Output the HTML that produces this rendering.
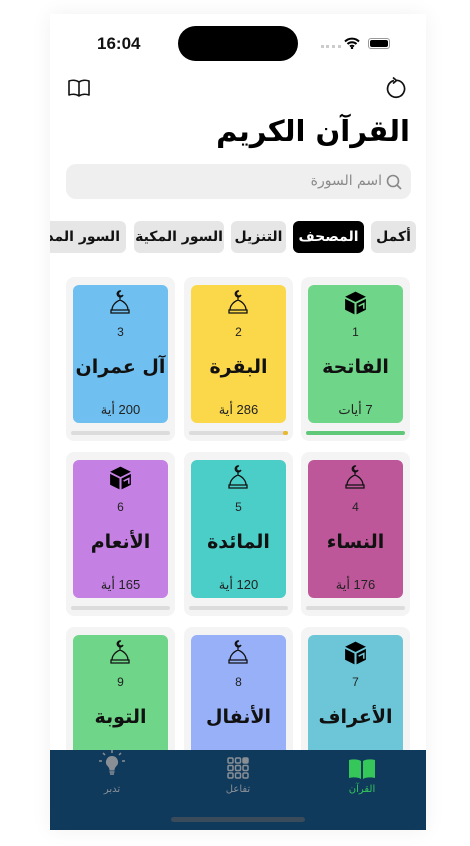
<!DOCTYPE html>
<html><head><meta charset="utf-8">
<style>
*{margin:0;padding:0;box-sizing:border-box}
body{width:470px;height:846px;background:#fff;position:relative;overflow:hidden;font-family:"Liberation Sans","Noto Sans CJK SC",sans-serif}
.screen{position:absolute;left:50px;top:14px;width:376px;height:816px;background:#fff;box-shadow:0 0 20px rgba(0,0,0,0.06);overflow:hidden}
.a{position:absolute}
.ar{font-family:"DejaVu Sans","Noto Sans CJK SC",sans-serif;direction:rtl}
.chip{position:absolute;top:207px;height:32px;border-radius:6px;background:#e6e6e6;font-size:14px;font-weight:bold;line-height:32px;text-align:center;color:#111;white-space:nowrap;overflow:hidden}
.cell{position:absolute;width:109px;height:164px;background:#f4f4f4;border-radius:8px}
.in{position:absolute;left:7px;top:8px;width:95px;height:138px;border-radius:6px;text-align:center}
.num{position:absolute;top:40px;width:100%;font-size:12px;color:#222}
.nm{position:absolute;top:71px;width:100%;font-size:19px;font-weight:bold;color:#111;direction:rtl;white-space:nowrap;font-family:"DejaVu Sans",sans-serif}
.ay{position:absolute;top:117px;width:100%;font-size:13px;color:#222;direction:rtl}
.bar{position:absolute;left:5px;top:154px;width:99px;height:4px;border-radius:2px;background:#dcdcdc}
.ic{position:absolute;left:34px;top:4px}
</style></head><body>
<div class="screen">
<div class="a" style="left:47px;top:20px;font-size:17px;font-weight:bold;color:#111">16:04</div>
<div class="a" style="left:128px;top:12px;width:120px;height:35px;border-radius:18px;background:#000"></div>
<div class="a" style="left:271px;top:31px;width:20px;height:3px;border-top:3px dotted #ccc"></div>
<svg class="a" style="left:294px;top:23px" width="16" height="12" viewBox="0 0 16 12"><path d="M1 4.5a10 10 0 0 1 14 0M3.5 7a6.5 6.5 0 0 1 9 0M6 9.5a3 3 0 0 1 4 0" stroke="#000" stroke-width="2" fill="none"/><circle cx="8" cy="11" r="1.2"/></svg>
<div class="a" style="left:318px;top:24px;width:22px;height:11px;border:1px solid #999;border-radius:3px;padding:1px"><div style="width:100%;height:100%;background:#000;border-radius:2px"></div></div>
<svg class="a" style="left:17px;top:64px" width="24" height="20" viewBox="0 0 24 20"><path d="M12 4C9 2 5 2 2 3v14c3-1 7-1 10 1 3-2 7-2 10-1V3c-3-1-7-1-10 1zM12 4v14" stroke="#111" stroke-width="1.6" fill="none" stroke-linejoin="round"/></svg>
<svg class="a" style="left:334px;top:62px" width="24" height="24" viewBox="0 0 24 24"><path d="M10 4.5A8.5 8.5 0 1 0 13 4.3" stroke="#111" stroke-width="1.7" fill="none"/><path d="M9 1.5l3.5 3-3.5 3" stroke="#111" stroke-width="1.7" fill="none"/></svg>
<div class="a ar" style="right:16px;top:100px;font-size:29px;font-weight:bold;color:#000;white-space:nowrap">القرآن الكريم</div>
<div class="a" style="left:16px;top:150px;width:345px;height:35px;background:#efefef;border-radius:10px"></div>
<svg class="a" style="left:336px;top:160px" width="16" height="16" viewBox="0 0 16 16"><circle cx="7" cy="7" r="5.5" stroke="#888" stroke-width="1.6" fill="none"/><path d="M11 11l4 4" stroke="#888" stroke-width="1.6"/></svg>
<div class="a ar" style="right:44px;top:159px;font-size:14px;color:#8a8a8a">اسم السورة</div>
<div class="chip ar" style="left:321px;width:45px">أكمل</div>
<div class="chip ar" style="left:243px;width:71px;background:#000;color:#fff">المصحف</div>
<div class="chip ar" style="left:181px;width:55px">التنزيل</div>
<div class="chip ar" style="left:84px;width:90px">السور المكية</div>
<div class="chip ar" style="left:-10px;width:86px;text-align:right;padding-right:6px">السور المدنية</div>

<div class="cell" style="left:251px;top:263px"><div class="in" style="background:#6fd588"><svg class="ic" width="27" height="28" viewBox="0 0 26 26"><path d="M13 2l10 5-10 5-10-5z" fill="#000"/><path d="M3 9l9 4.5V24l-9-4.5zM14 13.5L23 9v10.5l-9 4.5z" fill="#000"/><path d="M16 16l5-2.5v5" stroke="#6fd588" stroke-width="1.5" fill="none"/></svg><div class="num">1</div><div class="nm">الفاتحة</div><div class="ay">7 أيات</div></div><div class="bar" style="background:#5fc879"></div></div>
<div class="cell" style="left:134px;top:263px"><div class="in" style="background:#fbd84a"><svg class="ic" width="26" height="28" viewBox="0 0 26 28"><path d="M14 2a3 3 0 1 0 2 4 2.5 2.5 0 1 1-2-4zM13 7v4M13 11c-5 2-8 6-8 10h16c0-4-3-8-8-10zM4 21h18v3H4z" stroke="#111" stroke-width="1.3" fill="none"/></svg><div class="num">2</div><div class="nm">البقرة</div><div class="ay">286 أية</div></div><div class="bar"><div style="position:absolute;right:0;top:0;width:5px;height:4px;border-radius:2px;background:#e8b830"></div></div></div>
<div class="cell" style="left:16px;top:263px"><div class="in" style="background:#6fbff0"><svg class="ic" width="26" height="28" viewBox="0 0 26 28"><path d="M14 2a3 3 0 1 0 2 4 2.5 2.5 0 1 1-2-4zM13 7v4M13 11c-5 2-8 6-8 10h16c0-4-3-8-8-10zM4 21h18v3H4z" stroke="#111" stroke-width="1.3" fill="none"/></svg><div class="num">3</div><div class="nm">آل عمران</div><div class="ay">200 أية</div></div><div class="bar"></div></div>

<div class="cell" style="left:251px;top:438px"><div class="in" style="background:#bd5799"><svg class="ic" width="26" height="28" viewBox="0 0 26 28"><path d="M14 2a3 3 0 1 0 2 4 2.5 2.5 0 1 1-2-4zM13 7v4M13 11c-5 2-8 6-8 10h16c0-4-3-8-8-10zM4 21h18v3H4z" stroke="#111" stroke-width="1.3" fill="none"/></svg><div class="num">4</div><div class="nm">النساء</div><div class="ay">176 أية</div></div><div class="bar"></div></div>
<div class="cell" style="left:134px;top:438px"><div class="in" style="background:#4bcec8"><svg class="ic" width="26" height="28" viewBox="0 0 26 28"><path d="M14 2a3 3 0 1 0 2 4 2.5 2.5 0 1 1-2-4zM13 7v4M13 11c-5 2-8 6-8 10h16c0-4-3-8-8-10zM4 21h18v3H4z" stroke="#111" stroke-width="1.3" fill="none"/></svg><div class="num">5</div><div class="nm">المائدة</div><div class="ay">120 أية</div></div><div class="bar"></div></div>
<div class="cell" style="left:16px;top:438px"><div class="in" style="background:#c580e3"><svg class="ic" width="27" height="28" viewBox="0 0 26 26"><path d="M13 2l10 5-10 5-10-5z" fill="#000"/><path d="M3 9l9 4.5V24l-9-4.5zM14 13.5L23 9v10.5l-9 4.5z" fill="#000"/><path d="M16 16l5-2.5v5" stroke="#c580e3" stroke-width="1.5" fill="none"/></svg><div class="num">6</div><div class="nm">الأنعام</div><div class="ay">165 أية</div></div><div class="bar"></div></div>

<div class="cell" style="left:251px;top:613px"><div class="in" style="background:#6cc6d8"><svg class="ic" width="27" height="28" viewBox="0 0 26 26"><path d="M13 2l10 5-10 5-10-5z" fill="#000"/><path d="M3 9l9 4.5V24l-9-4.5zM14 13.5L23 9v10.5l-9 4.5z" fill="#000"/><path d="M16 16l5-2.5v5" stroke="#6cc6d8" stroke-width="1.5" fill="none"/></svg><div class="num">7</div><div class="nm">الأعراف</div></div></div>
<div class="cell" style="left:134px;top:613px"><div class="in" style="background:#97b0f8"><svg class="ic" width="26" height="28" viewBox="0 0 26 28"><path d="M14 2a3 3 0 1 0 2 4 2.5 2.5 0 1 1-2-4zM13 7v4M13 11c-5 2-8 6-8 10h16c0-4-3-8-8-10zM4 21h18v3H4z" stroke="#111" stroke-width="1.3" fill="none"/></svg><div class="num">8</div><div class="nm">الأنفال</div></div></div>
<div class="cell" style="left:16px;top:613px"><div class="in" style="background:#6fd588"><svg class="ic" width="26" height="28" viewBox="0 0 26 28"><path d="M14 2a3 3 0 1 0 2 4 2.5 2.5 0 1 1-2-4zM13 7v4M13 11c-5 2-8 6-8 10h16c0-4-3-8-8-10zM4 21h18v3H4z" stroke="#111" stroke-width="1.3" fill="none"/></svg><div class="num">9</div><div class="nm">التوبة</div></div></div>

<div class="a" style="left:0;top:736px;width:376px;height:80px;background:#0f3a5c">
<svg class="a" style="left:298px;top:8px" width="28" height="22" viewBox="0 0 28 22"><path d="M13 3C10 1 5 1 1 2v18c4-1 9-1 12 1zM15 3c3-2 8-2 12-1v18c-4-1-9-1-12 1z" fill="#35c75a"/></svg>
<div class="a ar" style="left:288px;top:34px;width:48px;text-align:center;font-size:10px;color:#35c75a">القرآن</div>
<svg class="a" style="left:177px;top:7px" width="22" height="22" viewBox="0 0 22 22" fill="none" stroke="#8a8f96" stroke-width="1.5"><rect x="1" y="1" width="5" height="5" rx="1.2"/><rect x="8.5" y="1" width="5" height="5" rx="1.2"/><rect x="16" y="1" width="5" height="5" rx="1.2" fill="#8a8f96"/><rect x="1" y="8.5" width="5" height="5" rx="1.2"/><rect x="8.5" y="8.5" width="5" height="5" rx="1.2"/><rect x="16" y="8.5" width="5" height="5" rx="1.2"/><rect x="1" y="16" width="5" height="5" rx="1.2"/><rect x="8.5" y="16" width="5" height="5" rx="1.2"/><rect x="16" y="16" width="5" height="5" rx="1.2"/></svg>
<div class="a ar" style="left:164px;top:34px;width:48px;text-align:center;font-size:10px;color:#8a8f96">تفاعل</div>
<svg class="a" style="left:48px;top:0px" width="28" height="28" viewBox="0 0 28 28"><path d="M14 6a6 6 0 0 0-4 10.5c1 1 1.5 2.5 1.5 4h5c0-1.5.5-3 1.5-4A6 6 0 0 0 14 6z" fill="#8a8f96"/><path d="M11.5 22h5M12 24h4M14 0v3M5 3l2 2M23 3l-2 2M1 11h3M24 11h3" stroke="#8a8f96" stroke-width="1.5"/></svg>
<div class="a ar" style="left:38px;top:34px;width:48px;text-align:center;font-size:10px;color:#8a8f96">تدبر</div>
<div class="a" style="left:121px;top:67px;width:134px;height:5px;border-radius:3px;background:#3a4b5c"></div>
</div>
</div>
</body></html>
